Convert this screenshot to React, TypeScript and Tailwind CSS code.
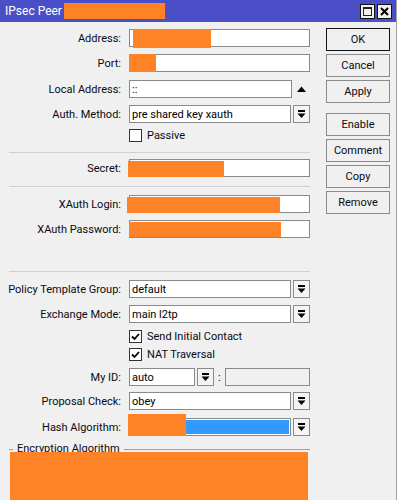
import { ReactNode } from 'react'

const ORANGE = 'bg-[#fd8326]'

function DropIcon() {
  return (
    <svg width="9" height="9" viewBox="0 0 9 9">
      <rect x="1" y="0" width="7" height="2" fill="#000" />
      <path d="M0.5 3.5 H8.5 L4.5 8 Z" fill="#000" />
    </svg>
  )
}

function DropButton() {
  return (
    <div className="flex h-[18px] w-[17px] shrink-0 items-center justify-center border border-[#8a8a8a] bg-[#f4f4f4]">
      <DropIcon />
    </div>
  )
}

function Row({ label, mt, children }: { label: string; mt: string; children: ReactNode }) {
  return (
    <div className={`flex h-[18px] items-center ${mt}`}>
      <div className="w-[121px] shrink-0 text-right text-[#0a0a14]">{label}</div>
      <div className="ml-[8px] flex h-full w-[181px] items-center">{children}</div>
    </div>
  )
}

function Field({ children, className = '' }: { children?: ReactNode; className?: string }) {
  return (
    <div className={`relative flex h-[18px] items-center border border-[#8a8a8a] bg-white pl-[2px] ${className}`}>
      {children}
    </div>
  )
}

function Check({ checked, label, mt }: { checked: boolean; label: string; mt: string }) {
  return (
    <div className={`ml-[129px] flex h-[13px] items-center gap-[5px] ${mt}`}>
      <div className="flex h-[13px] w-[13px] items-center justify-center border border-[#333] bg-white">
        {checked && (
          <svg width="9" height="9" viewBox="0 0 9 9">
            <path d="M1 4.5 L3.5 7 L8 2" stroke="#000" strokeWidth="1.8" fill="none" />
          </svg>
        )}
      </div>
      <span className="text-[#0a0a14]">{label}</span>
    </div>
  )
}

function Separator({ mt }: { mt: string }) {
  return <div className={`ml-[9px] h-px w-[301px] bg-[#d0d0d0] ${mt}`} />
}

function SideButton({ label, def, mt }: { label: string; def?: boolean; mt: string }) {
  return (
    <div
      className={`flex h-[23px] w-[64px] items-center justify-center bg-[#f0f0f0] text-[#0a0a14] ${mt} ${
        def ? 'border border-[#111]' : 'border border-[#8a8a8a]'
      }`}
    >
      {label}
    </div>
  )
}

export default function App() {
  return (
    <div
      className="flex h-[500px] w-[397px] flex-col overflow-hidden border-r border-[#a0a0a0] bg-[#f0f0f0] text-[11px] leading-none"
      style={{ fontFamily: 'Roboto, "Liberation Sans", sans-serif' }}
    >
      <div className="flex h-[22px] shrink-0 items-center bg-[#4b4fc7] pl-[5px] pr-[4px]">
        <span className="text-[12px] text-white">IPsec Peer</span>
        <div className={`ml-[2px] h-[16px] w-[101px] ${ORANGE}`} />
        <div className="ml-auto flex gap-[2px]">
          <div className="flex h-[15px] w-[15px] items-center justify-center border border-[#111] bg-[#f0f0f0]">
            <div className="h-[9px] w-[9px] border border-[#222] border-t-2" />
          </div>
          <div className="flex h-[15px] w-[15px] items-center justify-center border border-[#111] bg-[#f0f0f0]">
            <svg width="9" height="9" viewBox="0 0 9 9">
              <path d="M1 1 L8 8 M8 1 L1 8" stroke="#000" strokeWidth="2" />
            </svg>
          </div>
        </div>
      </div>

      <div className="flex flex-1">
        <div className="flex w-[320px] flex-col">
          <Row label="Address:" mt="mt-[7px]">
            <Field className="w-full">
              <div className={`absolute top-[-1px] left-[3px] h-[19px] w-[78px] ${ORANGE}`} />
            </Field>
          </Row>
          <Row label="Port:" mt="mt-[7px]">
            <Field className="w-full">
              <div className={`absolute top-[-1px] left-[-1px] h-[18px] w-[27px] ${ORANGE}`} />
            </Field>
          </Row>
          <Row label="Local Address:" mt="mt-[8px]">
            <Field className="w-[163px]">::</Field>
            <svg className="ml-[5px]" width="9" height="6" viewBox="0 0 9 6">
              <path d="M0 6 L4.5 0.5 L9 6 Z" fill="#000" />
            </svg>
          </Row>
          <Row label="Auth. Method:" mt="mt-[7px]">
            <Field className="w-[162px]">pre shared key xauth</Field>
            <div className="ml-[2px]">
              <DropButton />
            </div>
          </Row>
          <Check checked={false} label="Passive" mt="mt-[6px]" />
          <Separator mt="mt-[10px]" />
          <Row label="Secret:" mt="mt-[6px]">
            <Field className="w-full">
              <div className={`absolute top-[1px] left-[-2px] h-[16px] w-[96px] ${ORANGE}`} />
            </Field>
          </Row>
          <Separator mt="mt-[9px]" />
          <Row label="XAuth Login:" mt="mt-[8px]">
            <Field className="w-full">
              <div className={`absolute top-[1px] left-[-3px] h-[16px] w-[153px] ${ORANGE}`} />
            </Field>
          </Row>
          <Row label="XAuth Password:" mt="mt-[7px]">
            <Field className="w-full">
              <div className={`absolute top-[1px] left-[-1px] h-[15px] w-[152px] ${ORANGE}`} />
            </Field>
          </Row>
          <Separator mt="mt-[33px]" />
          <Row label="Policy Template Group:" mt="mt-[8px]">
            <Field className="w-[162px]">default</Field>
            <div className="ml-[2px]">
              <DropButton />
            </div>
          </Row>
          <Row label="Exchange Mode:" mt="mt-[7px]">
            <Field className="w-[162px]">main l2tp</Field>
            <div className="ml-[2px]">
              <DropButton />
            </div>
          </Row>
          <Check checked label="Send Initial Contact" mt="mt-[7px]" />
          <Check checked label="NAT Traversal" mt="mt-[5px]" />
          <Row label="My ID:" mt="mt-[7px]">
            <Field className="w-[66px]">auto</Field>
            <div className="ml-[2px]">
              <DropButton />
            </div>
            <span className="ml-[4px] w-[6px]">:</span>
            <div className="ml-auto h-[18px] w-[85px] border border-[#8a8a8a] bg-[#f0f0f0]" />
          </Row>
          <Row label="Proposal Check:" mt="mt-[6px]">
            <Field className="w-[162px]">obey</Field>
            <div className="ml-[2px]">
              <DropButton />
            </div>
          </Row>
          <Row label="Hash Algorithm:" mt="mt-[8px]">
            <div className="relative h-[18px] w-[162px] border border-[#8a8a8a] bg-white p-px">
              <div className="h-full w-full bg-[#3399ff]" />
              <div className={`absolute top-[-5px] left-[-2px] h-[22px] w-[58px] ${ORANGE}`} />
            </div>
            <div className="ml-[2px]">
              <DropButton />
            </div>
          </Row>
          <div className="relative ml-[9px] mt-[13px] h-[3px] w-[301px] border-t border-[#a0a0a0]">
            <span className="absolute top-[-7px] left-[4px] bg-[#f0f0f0] px-[4px] text-[#0a0a14]">
              Encryption Algorithm
            </span>
          </div>
          <div className={`relative ml-[10px] h-[60px] w-[298px] ${ORANGE}`} />
        </div>

        <div className="flex flex-col pl-[6px]">
          <SideButton label="OK" def mt="mt-[6px]" />
          <SideButton label="Cancel" mt="mt-[3px]" />
          <SideButton label="Apply" mt="mt-[3px]" />
          <SideButton label="Enable" mt="mt-[10px]" />
          <SideButton label="Comment" mt="mt-[3px]" />
          <SideButton label="Copy" mt="mt-[3px]" />
          <SideButton label="Remove" mt="mt-[3px]" />
        </div>
      </div>
    </div>
  )
}
